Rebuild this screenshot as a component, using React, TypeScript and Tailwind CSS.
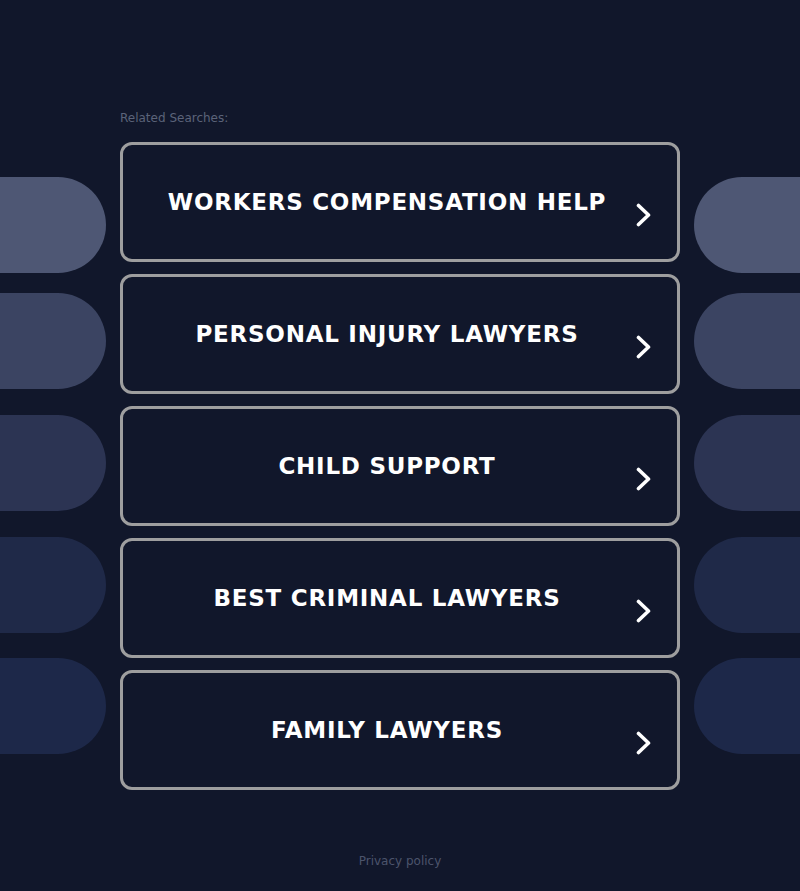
import React from "react";

const items = [
  "WORKERS COMPENSATION HELP",
  "PERSONAL INJURY LAWYERS",
  "CHILD SUPPORT",
  "BEST CRIMINAL LAWYERS",
  "FAMILY LAWYERS",
];

function Chevron() {
  return (
    <svg width="15" height="24" viewBox="0 0 15 24" className="block">
      <polyline
        points="2.5,2.5 12.5,12 2.5,21.5"
        fill="none"
        stroke="#ffffff"
        strokeWidth="3.6"
        strokeLinecap="round"
        strokeLinejoin="round"
      />
    </svg>
  );
}

function Pills({ side }: { side: "left" | "right" }) {
  const r = side === "left" ? "rounded-r-full" : "rounded-l-full";
  return (
    <div className="flex flex-col w-[106px] shrink-0 pt-[177px]">
      <div className={`h-[96px] bg-[#4e5774] ${r}`} />
      <div className={`h-[96px] mt-[20px] bg-[#3b4462] ${r}`} />
      <div className={`h-[96px] mt-[26px] bg-[#2c3453] ${r}`} />
      <div className={`h-[96px] mt-[26px] bg-[#1f2948] ${r}`} />
      <div className={`h-[96px] mt-[25px] bg-[#1d2849] ${r}`} />
    </div>
  );
}

export default function App() {
  return (
    <div
      className="w-[800px] h-[891px] bg-[#11172b] overflow-hidden flex flex-col"
      style={{ fontFamily: '"DejaVu Sans", "Liberation Sans", sans-serif' }}
    >
      <div className="flex justify-between">
        <Pills side="left" />
        <div className="w-[560px] shrink-0 pt-[110px] flex flex-col">
          <div className="text-[12px] leading-4 text-[#5b6379] mb-[16px]">
            Related Searches:
          </div>
          <div className="flex flex-col gap-[12px]">
            {items.map((t) => (
              <div
                key={t}
                className="h-[120px] border-[3px] border-[#9e9e9f] rounded-[12px] flex items-center pl-[15px] pr-[26px]"
              >
                <div className="flex-1 text-center text-white font-bold text-[23px] tracking-[0.75px] leading-none">
                  {t}
                </div>
                <div className="w-[15px] mt-[26px]">
                  <Chevron />
                </div>
              </div>
            ))}
          </div>
        </div>
        <div className="w-[106px] shrink-0 flex justify-end">
          <div className="w-[106px]">
            <Pills side="right" />
          </div>
        </div>
      </div>
      <div className="mt-[63px] text-center text-[12px] leading-4 text-[#4c546b]">
        Privacy policy
      </div>
    </div>
  );
}
